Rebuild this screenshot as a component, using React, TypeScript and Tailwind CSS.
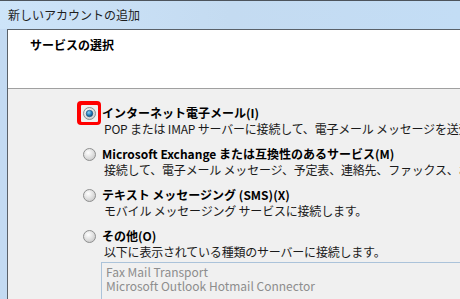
import React from 'react'

const font = { fontFamily: '"Noto Sans CJK JP", "Noto Sans", sans-serif' }

function Radio({ checked }: { checked?: boolean }) {
  return (
    <svg width="13" height="13" viewBox="0 0 13 13" className="shrink-0">
      <defs>
        <radialGradient id={checked ? 'rg-on' : 'rg-off'} cx="0.4" cy="0.35" r="0.7">
          <stop offset="0" stopColor="#ffffff" />
          <stop offset="1" stopColor="#c9c9c9" />
        </radialGradient>
        <radialGradient id="dot" cx="0.4" cy="0.35" r="0.7">
          <stop offset="0" stopColor="#8ed2f6" />
          <stop offset="0.6" stopColor="#1b79b8" />
          <stop offset="1" stopColor="#0d3f6b" />
        </radialGradient>
      </defs>
      <circle cx="6.5" cy="6.5" r="6" fill={checked ? 'url(#rg-on)' : 'url(#rg-off)'} stroke="#8e8f8f" strokeWidth="1" />
      {checked && <circle cx="6.5" cy="6.5" r="3.3" fill="url(#dot)" stroke="#1c4f78" strokeWidth="0.6" />}
    </svg>
  )
}

interface OptionProps {
  label: string
  desc: string
  checked?: boolean
  children?: React.ReactNode
}

function Option({ label, desc, checked, children }: OptionProps) {
  return (
    <div className="flex flex-col">
      <div className="flex items-center h-[24px]">
        <div
          className={
            checked
              ? 'w-[24px] h-[24px] flex items-center justify-center rounded-[4px] bg-[#ff0000]'
              : 'w-[24px] h-[24px] flex items-center justify-center'
          }
        >
          <div className={checked ? 'w-[17px] h-[17px] flex items-center justify-center bg-[#f0f0f0] rounded-[1px]' : 'flex'}>
            <Radio checked={checked} />
          </div>
        </div>
        <span className="ml-[1px] text-[12px] font-bold text-black whitespace-nowrap leading-none">{label}</span>
      </div>
      <div className="pl-[27px] text-[12px] text-[#1a1a1a] whitespace-nowrap leading-[16px] -mt-[4px] tracking-[-0.2px]">{desc}</div>
      {children}
    </div>
  )
}

export default function App() {
  return (
    <div className="w-[460px] h-[299px] overflow-hidden bg-[#c6dcf3] flex flex-col" style={font}>
      <div className="h-[29px] shrink-0 border-t border-[#4d545c] bg-gradient-to-r from-[#cde4f9] via-[#c4dbf1] to-[#c3ddf5] flex items-center pl-[8px]">
        <span className="text-[12px] text-[#1e1e1e] whitespace-nowrap leading-none">新しいアカウントの追加</span>
      </div>
      <div className="flex-1 flex min-h-0">
        <div className="w-[7px] shrink-0 bg-[#c3daf2]" />
        <div className="flex-1 flex flex-col border-l border-t border-[#5a6169] bg-[#f0f0f0] min-w-0">
          <div className="h-[59px] shrink-0 bg-white border-b border-[#a0a0a0] pl-[22px] pt-[9px] text-[12px] leading-none">
            <span className="font-bold text-black whitespace-nowrap">サービスの選択</span>
          </div>
          <div className="flex flex-col gap-[5px] pl-[69px] pt-[12px]">
            <Option
              checked
              label="インターネット電子メール(I)"
              desc="POP または IMAP サーバーに接続して、電子メール メッセージを送受信します。"
            />
            <Option
              label="Microsoft Exchange または互換性のあるサービス(M)"
              desc="接続して、電子メール メッセージ、予定表、連絡先、ファックス、およびボイス メール メッセージにアクセスします。"
            />
            <Option
              label="テキスト メッセージング (SMS)(X)"
              desc="モバイル メッセージング サービスに接続します。"
            />
            <Option label="その他(O)" desc="以下に表示されている種類のサーバーに接続します。">
              <div className="ml-[24px] mt-[2px] w-[400px] h-[60px] border border-[#abc3da] bg-[#f0f0f0] px-[4px] pt-[2px] text-[12px] leading-[14px] text-[#8d8d8d] whitespace-nowrap">
                <div>Fax Mail Transport</div>
                <div>Microsoft Outlook Hotmail Connector</div>
              </div>
            </Option>
          </div>
        </div>
      </div>
    </div>
  )
}
